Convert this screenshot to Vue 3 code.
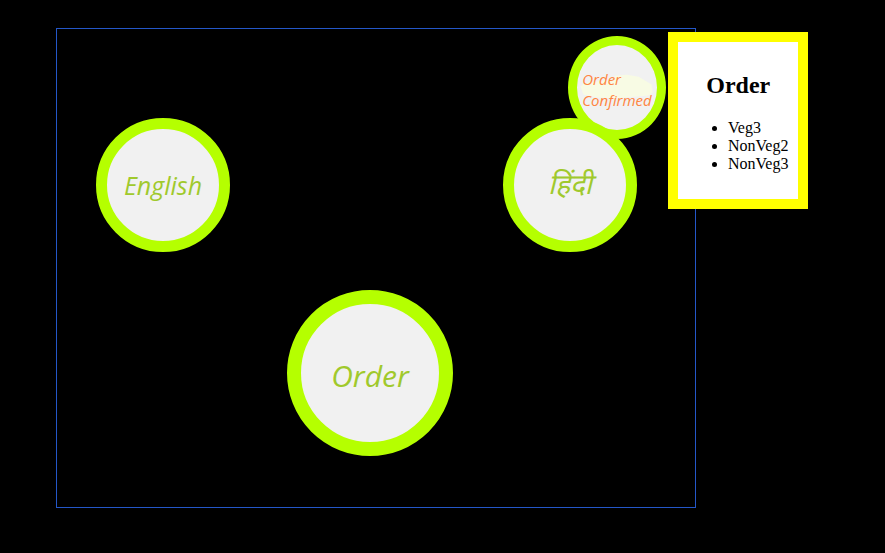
<script setup>
import { ref } from 'vue'

const items = ref(['Veg3', 'NonVeg2', 'NonVeg3'])
</script>

<template>
  <main class="page">
    <section class="stage" aria-label="Order board">
      <button type="button" class="disc confirmed">
        <svg class="progress" viewBox="0 0 80 86" aria-hidden="true">
          <path d="M3 42 L8 38 L20 37 L36 35 L38 31 L50 30 L62 32 L70 37 L75 40 L76 48 L72 51 L60 52 L40 54 L20 53 L6 50 Z" />
        </svg>
        <span class="label">Order<br />Confirmed</span>
      </button>
      <button type="button" class="disc english"><span class="label">English</span></button>
      <button type="button" class="disc hindi" lang="hi"><span class="label">हिंदी</span></button>
      <button type="button" class="disc order"><span class="label">Order</span></button>
      <aside class="summary">
        <h2>Order</h2>
        <ul>
          <li v-for="item in items" :key="item">{{ item }}</li>
        </ul>
      </aside>
    </section>
  </main>
</template>

<style>
body {
  margin: 0;
  background: #000;
}
</style>

<style scoped>
.page {
  padding: 28px 56px 45px;
}

.stage {
  position: relative;
  box-sizing: border-box;
  max-width: 640px;
  aspect-ratio: 4 / 3;
  border: 1px solid #2457c8;
}

.disc {
  position: absolute;
  box-sizing: border-box;
  display: flex;
  align-items: center;
  justify-content: center;
  padding: 0;
  border: 11px solid #b5ff00;
  border-radius: 50%;
  background: #f1f1f1;
  color: #a0c92c;
  font-family: "Open Sans", "Noto Sans", sans-serif;
  font-style: italic;
  cursor: pointer;
}

.label {
  position: relative;
  white-space: nowrap;
}

.english {
  left: 39px;
  top: 89px;
  width: 134px;
  height: 134px;
  font-size: 25px;
}

.hindi {
  left: 446px;
  top: 89px;
  width: 134px;
  height: 134px;
  font-family: "Noto Sans Devanagari", "Noto Sans", sans-serif;
  font-style: oblique;
  font-size: 28px;
  line-height: 32px;
}

.order {
  left: 230px;
  top: 261px;
  width: 166px;
  height: 166px;
  border-width: 14px;
  font-size: 30px;
}

.hindi .label,
.order .label,
.confirmed .label {
  padding-top: 4px;
}

.confirmed {
  left: 511px;
  top: 7px;
  width: 98px;
  height: 103px;
  border-width: 9px;
  color: #ff8541;
  font-size: 15px;
  line-height: 21px;
  text-align: left;
}

.progress {
  position: absolute;
  width: 100%;
  height: 100%;
  fill: #f8fbe4;
}

.summary {
  position: absolute;
  left: 611px;
  top: 3px;
  padding: 10px;
  border: 10px solid #ff0;
  background: #fff;
  color: #000;
  font-family: "Liberation Serif", serif;
  font-size: 16px;
  line-height: 18px;
}

.summary h2 {
  margin: 20px 0;
  font-size: 24px;
  line-height: 27px;
  text-align: center;
}

.summary ul {
  margin: 16px 0;
  padding-left: 40px;
}
</style>
